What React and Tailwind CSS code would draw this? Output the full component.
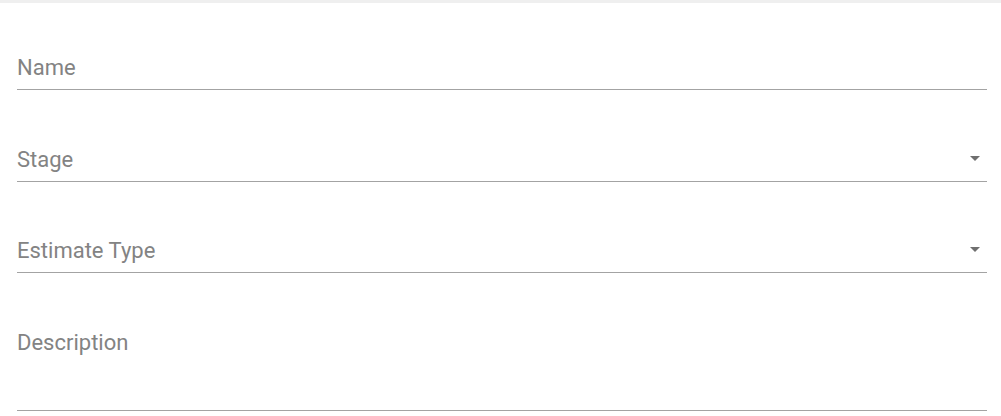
const fields = [
  { label: "Name", gap: "mt-[51px]" },
  { label: "Stage", select: true, gap: "mt-[56px]" },
  { label: "Estimate Type", select: true, gap: "mt-[55px]" },
  { label: "Description", multiline: true, gap: "mt-[56px]" },
];

const Arrow = () => (
  <svg viewBox="0 0 24 24" className="w-6 h-6 shrink-0 fill-[#6f6f6f]">
    <path d="M7 10l5 5 5-5z" />
  </svg>
);

const Field = ({ label, select, multiline, gap }) => (
  <div className={gap}>
    <div
      className={`flex items-start border-b border-[#a3a3a3] ${multiline ? "pb-[53px]" : "pb-[7px]"}`}
    >
      <span className="flex-1 text-[22px] leading-7 font-normal text-[#838383]">{label}</span>
      {select && <Arrow />}
    </div>
  </div>
);

export default function App() {
  return (
    <div className="w-[1001px] h-[416px] bg-white overflow-hidden font-['Roboto',sans-serif]">
      <div className="h-[3px] bg-[#efefef]" />
      <div className="pl-[17px] pr-[14px] flex flex-col">
        {fields.map((f) => (
          <Field key={f.label} {...f} />
        ))}
      </div>
    </div>
  );
}
